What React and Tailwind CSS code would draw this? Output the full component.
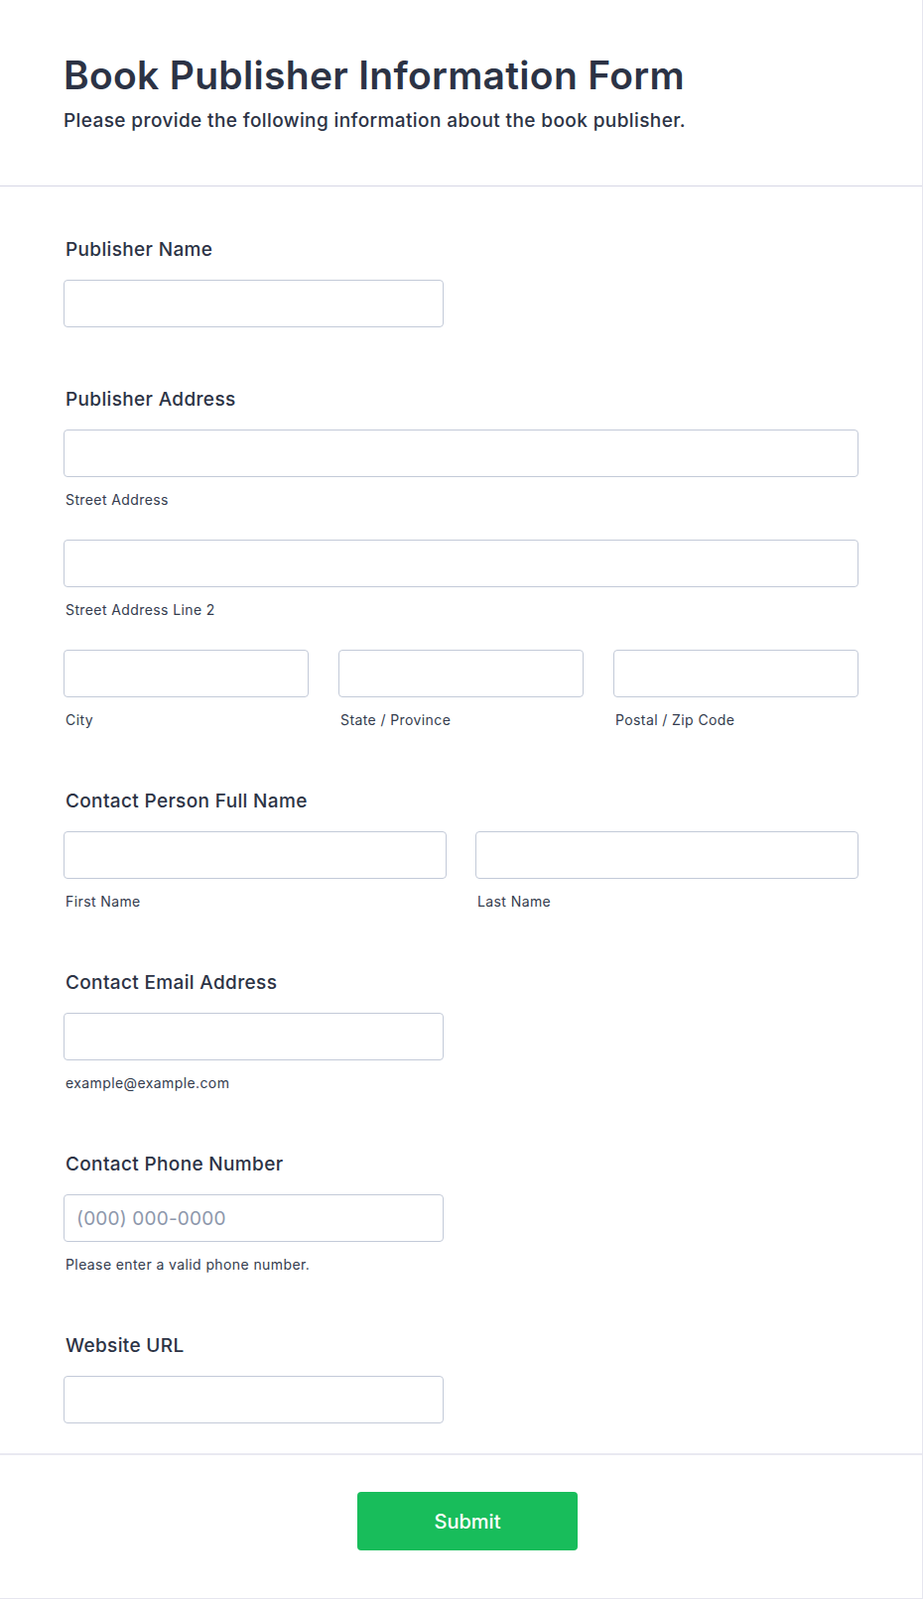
const inputCls =
  "block h-[48px] w-full rounded-[4px] border border-[#c3cad8] bg-white px-3 text-[19px] tracking-[0.2px] text-[#2c3345] outline-none placeholder:text-[#8d97ab]";

function Label({ children }) {
  return (
    <label className="mb-[19px] block pl-[2px] text-[19px] leading-[22px] font-medium tracking-[0.35px] text-[#2c3345]">
      {children}
    </label>
  );
}

function Sub({ children }) {
  return (
    <span className="mt-[14px] block pl-[2px] text-[14px] leading-[18px] tracking-[0.4px] text-[#343c4e]">
      {children}
    </span>
  );
}

function Field({ sub, placeholder, className = "" }) {
  return (
    <div className={className}>
      <input type="text" placeholder={placeholder} className={inputCls} />
      {sub && <Sub>{sub}</Sub>}
    </div>
  );
}

export default function App() {
  return (
    <main className="min-h-screen bg-white font-[Inter,sans-serif] text-[#2c3345]">
      <div className="w-full border-r border-b border-[#e6e6ef]">
        <header className="border-b border-[#d6d6e6] px-16 pt-[53px] pb-[54px]">
          <h1 className="text-[39px] leading-[46px] font-semibold tracking-[0.3px] text-[#2c3345]">
            Book Publisher Information Form
          </h1>
          <p className="mt-3 text-[19px] leading-[22px] font-medium tracking-[0.4px] text-[#2c3345]">
            Please provide the following information about the book publisher.
          </p>
        </header>

        <form className="flex flex-col gap-[62px] px-16 pt-[53px] pb-[30px]" onSubmit={(e) => e.preventDefault()}>
          <div>
            <Label>Publisher Name</Label>
            <Field className="w-[383px]" />
          </div>

          <div>
            <Label>Publisher Address</Label>
            <Field sub="Street Address" />
            <Field sub="Street Address Line 2" className="mt-[31px]" />
            <div className="mt-[31px] grid grid-cols-3 gap-[30px]">
              <Field sub="City" />
              <Field sub="State / Province" />
              <Field sub="Postal / Zip Code" />
            </div>
          </div>

          <div>
            <Label>Contact Person Full Name</Label>
            <div className="grid grid-cols-2 gap-[29px]">
              <Field sub="First Name" />
              <Field sub="Last Name" />
            </div>
          </div>

          <div>
            <Label>Contact Email Address</Label>
            <Field className="w-[383px]" sub="example@example.com" />
          </div>

          <div>
            <Label>Contact Phone Number</Label>
            <Field className="w-[383px]" placeholder="(000) 000-0000" sub="Please enter a valid phone number." />
          </div>

          <div>
            <Label>Website URL</Label>
            <Field className="w-[383px]" />
          </div>
        </form>

        <div className="flex justify-center border-t-2 border-[#e9e9f1] pt-[37px] pb-[48px] pl-[13px]">
          <button
            type="submit"
            className="h-[59px] w-[222px] rounded-[4px] bg-[#18bd5b] text-[20px] font-medium text-white"
          >
            Submit
          </button>
        </div>
      </div>
    </main>
  );
}
